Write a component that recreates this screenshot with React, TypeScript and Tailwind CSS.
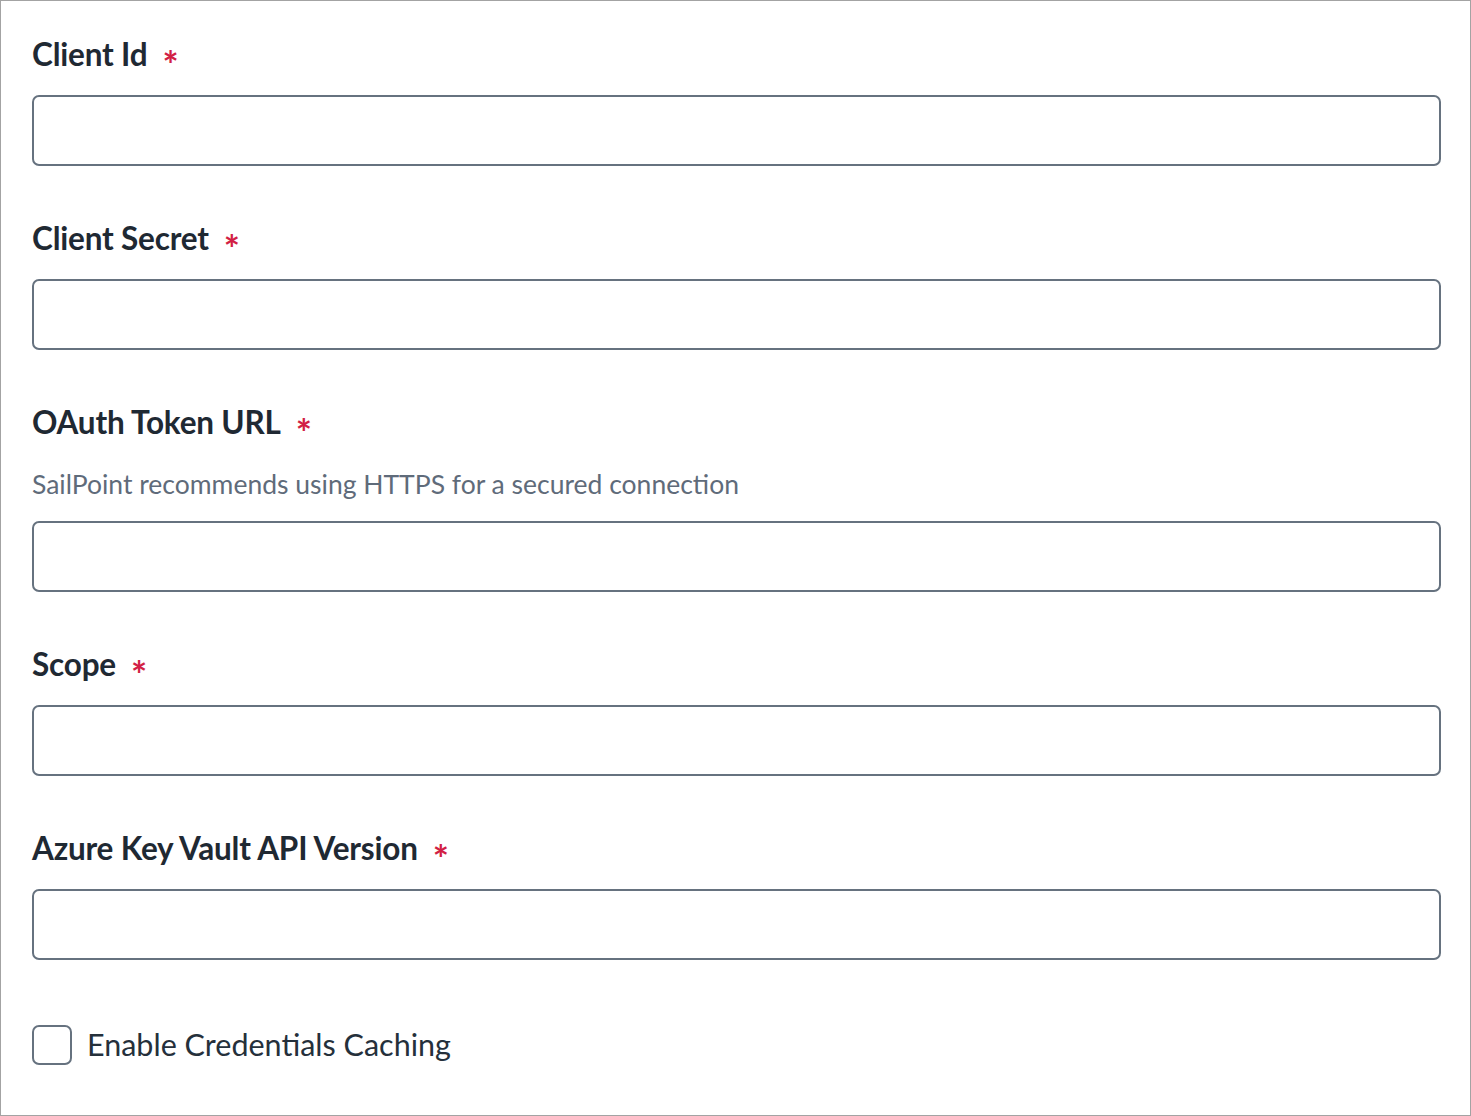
import React from 'react'

const font = { fontFamily: 'Lato, "Noto Sans", sans-serif' }

function Field({ label, helper }: { label: string; helper?: string }) {
  return (
    <div className="flex flex-col">
      <div className="h-10 flex items-center mb-5">
        <span className="text-[31.5px] font-bold text-[#1f2933] tracking-[-0.2px]">{label}</span>
        <span className="ml-[15px] text-[38px] font-bold text-[#d21f45] leading-none translate-y-[9px]">*</span>
      </div>
      {helper && (
        <div className="h-10 flex items-center mt-[2px] mb-4">
          <span className="text-[26.5px] text-[#5f6b7a]">{helper}</span>
        </div>
      )}
      <input
        type="text"
        className="h-[71px] w-full rounded-[7px] border-2 border-[#66727f] bg-white px-4 outline-none"
      />
    </div>
  )
}

export default function App() {
  return (
    <div style={font} className="w-[1471px] h-[1116px] box-border border border-[#a3a3a3] bg-white pl-[31px] pr-[29px] pt-[34px]">
      <div className="flex flex-col gap-[53px]">
        <Field label="Client Id" />
        <Field label="Client Secret" />
        <Field label="OAuth Token URL" helper="SailPoint recommends using HTTPS for a secured connection" />
        <Field label="Scope" />
        <Field label="Azure Key Vault API Version" />
      </div>
      <label className="flex items-center mt-[62px]">
        <span className="w-10 h-10 rounded-[7px] border-2 border-[#66727f] bg-white" />
        <span className="ml-[15px] text-[30.5px] text-[#25303b]">Enable Credentials Caching</span>
      </label>
    </div>
  )
}
